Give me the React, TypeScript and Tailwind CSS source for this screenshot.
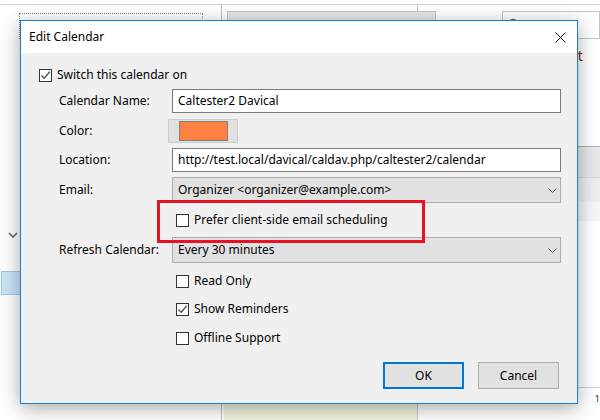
import React from "react";

const Check = ({ checked, label }: { checked?: boolean; label: string }) => (
  <div className="flex items-center h-[18px]">
    <span className="w-[13px] h-[13px] border border-[#333333] bg-white flex items-center justify-center">
      {checked && (
        <svg width="11" height="11" viewBox="0 0 11 11">
          <path d="M1.5 5.5 L4.2 8.2 L9.8 1.8" fill="none" stroke="#555555" strokeWidth="1.4" />
        </svg>
      )}
    </span>
    <span className="ml-[5px] text-[12px] text-black">{label}</span>
  </div>
);

const Row = ({ label, children, className = "" }: { label: string; children: React.ReactNode; className?: string }) => (
  <div className={`flex items-center ml-[20px] ${className}`}>
    <span className="w-[113px] text-[12px] text-black">{label}</span>
    <div className="flex-1">{children}</div>
  </div>
);

const Chevron = () => (
  <svg width="9" height="5" viewBox="0 0 9 5">
    <path d="M0.5 0.5 L4.5 4.5 L8.5 0.5" fill="none" stroke="#555555" strokeWidth="1" />
  </svg>
);

const Select = ({ value }: { value: string }) => (
  <div className="h-[26px] bg-[#e1e1e1] border border-[#adadad] flex items-center justify-between pl-[5px] pr-[3px]">
    <span className="text-[12px] text-black">{value}</span>
    <Chevron />
  </div>
);

const TextBox = ({ value }: { value: string }) => (
  <div className="h-[24px] bg-white border border-[#7a7a7a] flex items-center pl-[5px]">
    <span className="text-[12px] text-black">{value}</span>
  </div>
);

// the Outlook window sitting behind the dialog
const Backdrop = () => (
  <div className="flex flex-col w-full h-full bg-white">
    <div className="h-[4px]" />
    <div className="h-px bg-[#d4d4d4]" />
    <div className="flex flex-1">
      {/* folder pane */}
      <div className="w-[223px] border-r border-[#b9bfca] flex flex-col">
        <div className="mt-[8px] ml-[19px] w-[184px] h-[26px] border border-dotted border-[#8a8a8a]" />
        <div className="mt-[193px] ml-[8px]">
          <svg width="10" height="6" viewBox="0 0 10 6">
            <path d="M1 1 L5 5 L9 1" fill="none" stroke="#666666" strokeWidth="1.6" />
          </svg>
        </div>
        <div className="mt-[33px] ml-px w-[60px] h-[24px] bg-[#cce4f7] border border-[#99c9ef]" />
      </div>
      {/* calendar view */}
      <div className="w-[196px] border-r border-[#c6c6c6] flex flex-col">
        <div className="mt-[6px] ml-[5px] w-[209px] h-[24px] bg-[#e6e6e6] border border-[#c4c4c4]" />
        <div className="flex-1" />
        <div className="ml-[2px] h-[22px] bg-[#eef4df] border-t border-[#c9d4b3]" />
      </div>
      {/* right pane */}
      <div className="flex-1 flex flex-col">
        <div className="mt-[6px] ml-[84px] h-[27px] border border-[#c6c6c6] border-b-0 flex items-center pl-[3px]">
          <svg width="14" height="14" viewBox="0 0 14 14">
            <circle cx="7" cy="6" r="4.5" fill="none" stroke="#666" strokeWidth="1.5" />
          </svg>
        </div>
        <div className="h-px bg-[#c6c6c6]" />
        <div className="pl-[160px] pt-[10px] text-[14px] text-[#7a1020] leading-none">t</div>
        <div className="mt-[83px] h-px bg-[#a4adbf]" />
        <div className="h-[30px] bg-[#e8e8e8]" />
        <div className="h-px bg-[#d6d6d6]" />
        <div className="h-[24px] bg-[#eeeeee]" />
        <div className="h-[19px] bg-[#f6f6f6]" />
        <div className="flex-1" />
        <div className="h-px bg-[#d0d0d0]" />
        <div className="h-[32px] pl-[177px] pt-[4px] text-[9px] text-[#333]">1</div>
      </div>
    </div>
  </div>
);

export default function App() {
  return (
    <div className="relative w-[600px] h-[420px] overflow-hidden bg-white font-['Segoe_UI','Noto_Sans',sans-serif]">
      <Backdrop />

      {/* Edit Calendar dialog */}
      <div className="absolute left-[20px] top-[20px] w-[558px] h-[384px] border border-[#1a7fd4] bg-[#f0f0f0] shadow-[0_4px_18px_rgba(0,0,0,0.35)] flex flex-col">
        <div className="h-[32px] bg-white flex items-center justify-between pl-[8px] pr-[11px] shrink-0">
          <span className="text-[12px] text-black">Edit Calendar</span>
          <svg width="11" height="11" viewBox="0 0 11 11">
            <path d="M0.5 0.5 L10.5 10.5 M10.5 0.5 L0.5 10.5" stroke="#111" strokeWidth="1" />
          </svg>
        </div>

        <div className="flex flex-col pl-[18px] pr-[16px]">
          <div className="mt-[13px]">
            <Check checked label="Switch this calendar on" />
          </div>

          <Row label="Calendar Name:" className="mt-[5px]">
            <TextBox value="Caltester2 Davical" />
          </Row>

          <Row label="Color:" className="mt-[6px]">
            <div className="-ml-[4px] w-[70px] h-[24px] bg-[#e1e1e1] border border-[#cccccc] flex items-start pt-px pl-[10px]">
              <div className="w-[49px] h-[20px] bg-[#ff8040] border border-[#7f7f7f]" />
            </div>
          </Row>

          <Row label="Location:" className="mt-[5px]">
            <TextBox value="http://test.local/davical/caldav.php/caltester2/calendar" />
          </Row>

          <Row label="Email:" className="mt-[5px]">
            <Select value="Organizer <organizer@example.com>" />
          </Row>

          <div className="mt-[8px] ml-[137px]">
            <Check label="Prefer client-side email scheduling" />
          </div>

          <Row label="Refresh Calendar:" className="mt-[8px]">
            <Select value="Every 30 minutes" />
          </Row>

          <div className="mt-[9px] ml-[137px]">
            <Check label="Read Only" />
          </div>
          <div className="mt-[10px] ml-[137px]">
            <Check checked label="Show Reminders" />
          </div>
          <div className="mt-[11px] ml-[137px]">
            <Check label="Offline Support" />
          </div>

          <div className="mt-[15px] mr-[2px] flex justify-end gap-[14px]">
            <button className="w-[81px] h-[27px] bg-[#e1e1e1] border-2 border-[#0078d7] text-[12px] text-black">
              OK
            </button>
            <button className="w-[81px] h-[27px] bg-[#e1e1e1] border border-[#adadad] text-[12px] text-black">
              Cancel
            </button>
          </div>
        </div>
      </div>

      {/* red annotation around the scheduling option */}
      <div className="absolute left-[157px] top-[200px] w-[268px] h-[43px] border-[3px] border-[#e81123]" />
    </div>
  );
}
